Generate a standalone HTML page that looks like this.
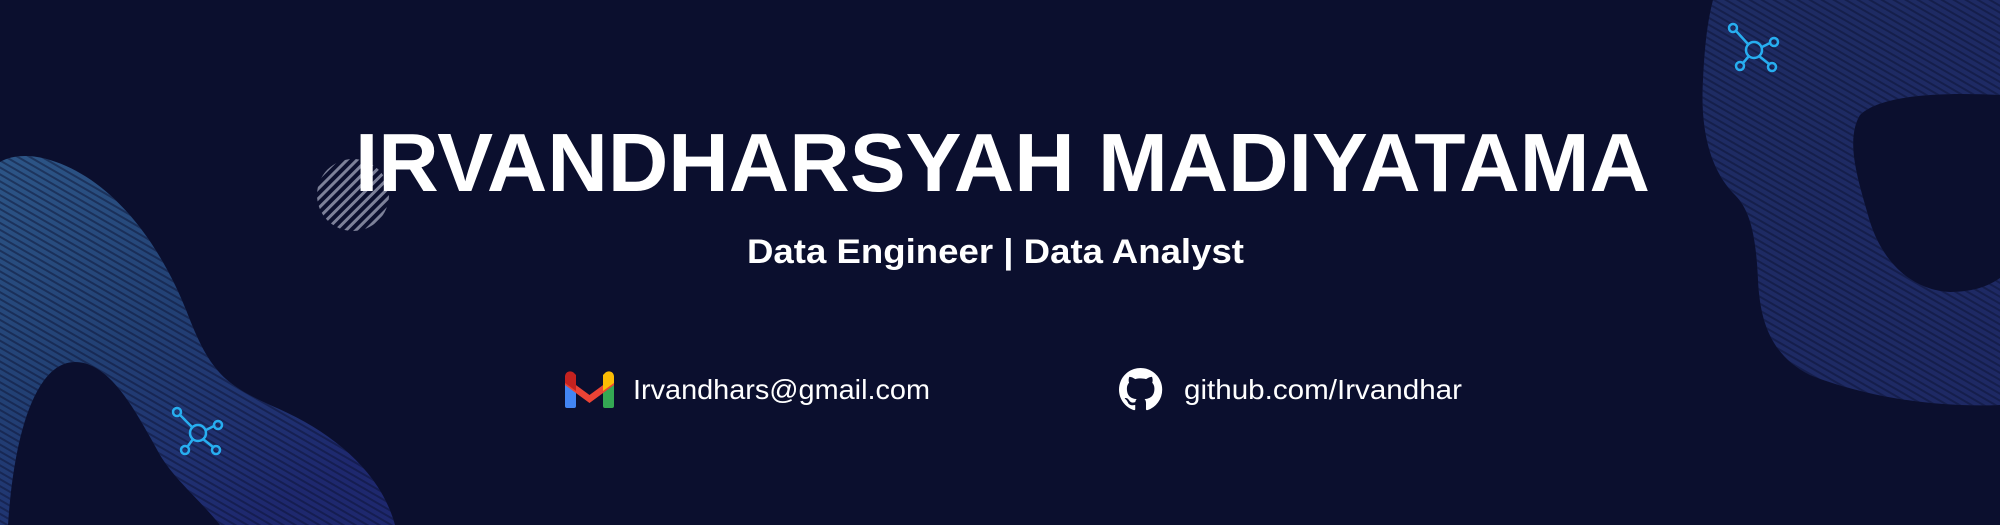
<!DOCTYPE html>
<html><head><meta charset="utf-8"><style>
html,body{margin:0;padding:0;background:#0b0f2e;width:2000px;height:525px;overflow:hidden}
svg{display:block}
</style></head><body>
<svg width="2000" height="525" viewBox="0 0 2000 525" xmlns="http://www.w3.org/2000/svg">
<defs>
<linearGradient id="lg" x1="0" y1="0" x2="0.6" y2="1">
<stop offset="0" stop-color="#3b74ad"/>
<stop offset="0.5" stop-color="#2c5592"/>
<stop offset="1" stop-color="#26338a"/>
</linearGradient>
<linearGradient id="rg" x1="0" y1="0" x2="1" y2="1">
<stop offset="0" stop-color="#2a3f86"/>
<stop offset="1" stop-color="#2a3a88"/>
</linearGradient>
<pattern id="hatch" width="7" height="7" patternUnits="userSpaceOnUse" patternTransform="rotate(45)">
<rect width="7" height="7" fill="#0b0f2e"/>
<rect x="0" y="0" width="3" height="7" fill="#7d8199"/>
</pattern>
<pattern id="lines" width="6" height="6" patternUnits="userSpaceOnUse" patternTransform="rotate(30)">
<rect width="6" height="6" fill="none"/>
<rect width="6" height="2" fill="#0b0f2e" opacity="0.45"/>
</pattern>
</defs>
<rect width="2000" height="525" fill="#0b0f2e"/>

<path d="M0 162 C12 155 30 154 50 160 C110 178 160 240 190 320 C210 370 225 385 270 405 C330 430 380 470 395 525 L220 525 C200 500 175 480 160 455 C135 410 110 362 75 362 C40 362 15 420 8 525 L0 525 Z" fill="url(#lg)" opacity="0.7"/>
<path d="M0 162 C12 155 30 154 50 160 C110 178 160 240 190 320 C210 370 225 385 270 405 C330 430 380 470 395 525 L220 525 C200 500 175 480 160 455 C135 410 110 362 75 362 C40 362 15 420 8 525 L0 525 Z" fill="url(#lines)"/>

<path d="M1713 0 L2000 0 L2000 95 C1940 92 1880 95 1860 115 C1845 140 1858 180 1868 215 C1880 260 1910 290 1950 292 C1975 292 1990 285 2000 278 L2000 405 C1930 408 1860 395 1810 375 C1770 355 1760 320 1758 280 C1756 235 1750 210 1735 195 C1710 170 1700 130 1703 80 C1705 40 1708 20 1713 0 Z" fill="url(#rg)" opacity="0.6"/>
<path d="M1713 0 L2000 0 L2000 95 C1940 92 1880 95 1860 115 C1845 140 1858 180 1868 215 C1880 260 1910 290 1950 292 C1975 292 1990 285 2000 278 L2000 405 C1930 408 1860 395 1810 375 C1770 355 1760 320 1758 280 C1756 235 1750 210 1735 195 C1710 170 1700 130 1703 80 C1705 40 1708 20 1713 0 Z" fill="url(#lines)"/>

<circle cx="353" cy="195" r="36" fill="url(#hatch)"/>

<g fill="none" stroke="#27aef0" stroke-width="2.5">
<g transform="translate(198,433)">
<circle r="8"/><circle cx="-21" cy="-21" r="4"/><circle cx="20" cy="-8" r="4"/><circle cx="-13" cy="17" r="4"/><circle cx="18" cy="17" r="4"/>
<path d="M-6 -6 L-18 -18 M8 -3 L16 -7 M-5 6 L-10 13 M5 6 L15 14"/>
</g>
<g transform="translate(1754,50)">
<circle r="8"/><circle cx="-21" cy="-22" r="4"/><circle cx="20" cy="-8" r="4"/><circle cx="-14" cy="16" r="4"/><circle cx="18" cy="17" r="4"/>
<path d="M-6 -6 L-18 -19 M8 -3 L16 -7 M-5 6 L-11 13 M5 6 L15 14"/>
</g>
</g>

<text x="355" y="191" font-family="Liberation Sans, sans-serif" font-weight="bold" font-size="83" fill="#fff" textLength="1295" lengthAdjust="spacingAndGlyphs">IRVANDHARSYAH MADIYATAMA</text>
<text x="747" y="263" font-family="Liberation Sans, sans-serif" font-weight="bold" font-size="34" fill="#fff" textLength="497" lengthAdjust="spacingAndGlyphs">Data Engineer | Data Analyst</text>

<g transform="translate(565,371)">
<rect x="0" y="4" width="11" height="33" rx="2" fill="#4285f4"/>
<rect x="38" y="4" width="11" height="33" rx="2" fill="#34a853"/>
<path d="M0 6 L24.5 24 L49 6 L49 14 L24.5 32 L0 14 Z" fill="#ea4335"/>
<path d="M0 6 C0 0 6 -1 9 2 L11 4 L11 20 L0 12 Z" fill="#c5221f"/>
<path d="M49 6 C49 0 43 -1 40 2 L38 4 L38 20 L49 12 Z" fill="#fbbc04"/>
</g>
<text x="633" y="399" font-family="Liberation Sans, sans-serif" font-size="28" fill="#fff" textLength="297" lengthAdjust="spacingAndGlyphs">Irvandhars@gmail.com</text>

<g transform="translate(1119,368) scale(2.7)">
<path fill="#fff" d="M8 0C3.58 0 0 3.58 0 8c0 3.54 2.29 6.53 5.47 7.59.4.07.55-.17.55-.38 0-.19-.01-.82-.01-1.49-2.01.37-2.53-.49-2.69-.94-.09-.23-.48-.94-.82-1.13-.28-.15-.68-.52-.01-.53.63-.01 1.08.58 1.23.82.72 1.21 1.87.87 2.330.66.07-.52.28-.87.51-1.07-1.78-.2-3.64-.89-3.64-3.95 0-.87.31-1.59.82-2.15-.08-.2-.36-1.02.08-2.12 0 0 .67-.21 2.2.82.64-.18 1.32-.27 2-.27.68 0 1.36.09 2 .27 1.53-1.04 2.2-.82 2.2-.82.44 1.1.16 1.92.08 2.12.51.56.82 1.27.82 2.15 0 3.07-1.87 3.75-3.65 3.95.29.25.54.73.54 1.48 0 1.07-.01 1.93-.01 2.2 0 .21.15.46.55.38A8.013 8.013 0 0016 8c0-4.42-3.58-8-8-8z"/>
</g>
<text x="1184" y="399" font-family="Liberation Sans, sans-serif" font-size="28" fill="#fff" textLength="278" lengthAdjust="spacingAndGlyphs">github.com/Irvandhar</text>
</svg>
</body></html>
